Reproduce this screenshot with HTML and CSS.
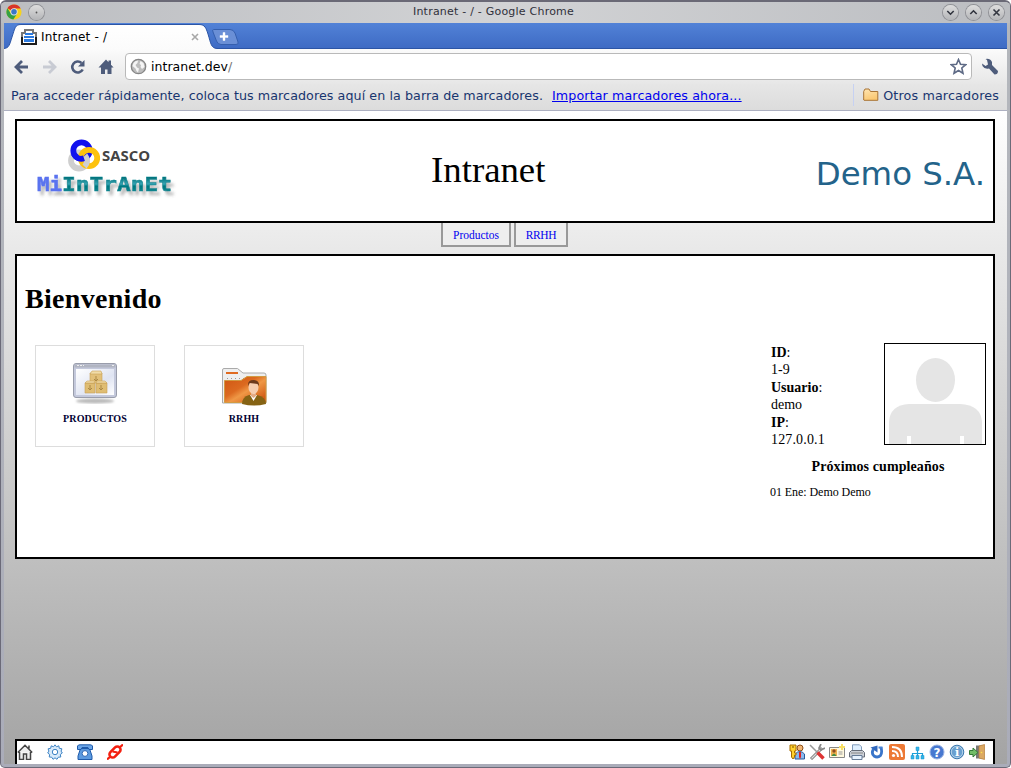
FILE: index.html
```html
<!DOCTYPE html>
<html lang="es">
<head>
<meta charset="utf-8">
<title>Intranet - /</title>
<link rel="stylesheet" href="styles.css">
</head>
<body>
<div class="window">
  <header class="titlebar">
    <svg class="app-icon" width="16" height="16" viewBox="0 0 16 16"><circle cx="8" cy="8" r="7.6" fill="#f5d21e"/><path d="M8 8 1.4 4.2A7.6 7.6 0 0 1 14.7 4.5L8 4.4z" fill="#d8332a"/><path d="M1.4 4.2A7.6 7.6 0 0 0 7.3 15.6L11 10 5 9.8z" fill="#35a044"/><circle cx="8" cy="7.8" r="3.6" fill="#eee"/><circle cx="8" cy="7.8" r="2.8" fill="#3b77c5"/></svg>
    <span class="round-btn pin"><svg width="15" height="15"><circle cx="7.5" cy="7.5" r=".9" fill="#555"/></svg></span>
    <span class="window-title">Intranet - / - Google Chrome</span>
    <span class="controls">
      <span class="round-btn"><svg width="15" height="15"><path d="M4.3 6 7.5 9.2 10.7 6" fill="none" stroke="#333640" stroke-width="1.6"/></svg></span>
      <span class="round-btn"><svg width="15" height="15"><path d="M4.3 9 7.5 5.8 10.7 9" fill="none" stroke="#333640" stroke-width="1.6"/></svg></span>
      <span class="round-btn"><svg width="15" height="15"><path d="M4.5 4.5l6 6M10.5 4.5l-6 6" stroke="#333640" stroke-width="1.6"/></svg></span>
    </span>
  </header>

  <div class="browser">
    <div class="tabstrip">
      <svg class="tab-shape" width="240" height="26" viewBox="0 0 240 26">
        <defs><linearGradient id="tabFill" x2="0" y2="1"><stop offset="0" stop-color="#fff"/><stop offset="1" stop-color="#fbfbfb"/></linearGradient></defs>
        <path d="M0 25.500C5 25 5.500 22 8 14 11 5 11 1.500 17 1.500H195C201 1.500 202 5 204 11 207 21 207 25 213 25.500H240V27H0z" fill="url(#tabFill)" stroke="#2c55a5"/>
        <path d="M209.500 6.500H226Q229.500 6.500 231 10L234 19Q235 21.500 232 21.500H217Q214 21.500 212.500 18L209 9Q208 6.500 209.500 6.500z" fill="#6a8fd6" stroke="#355fae"/>
        <path d="M219 9.500h2v3h3v2h-3v3h-2v-3h-3v-2h3z" fill="#fff" stroke="#fff" stroke-width=".4"/>
      </svg>
      <div class="tab">
        <svg width="16" height="16" viewBox="0 0 16 16"><path d="M3 0h10v3h3v6H0V3h3z" fill="#777"/><path d="M0 8h16v8H0z" fill="#1d1d1d"/><path d="M5 2h6v3h3v9H2V5h3z" fill="#fff"/><path d="M4 4h8v2H4zM3 7h10v2H3zM3 10h10v3H3z" fill="#2d7be0"/></svg>
        <span class="tab-label">Intranet - /</span>
        <svg width="8" height="8"><path d="M1 1l6 6M7 1 1 7" stroke="#a8a8a8" stroke-width="1.6"/></svg>
      </div>
    </div>

    <div class="toolbar">
      <svg width="16" height="16"><path d="M8 2 2 8l6 6M2.500 8h11.500" fill="none" stroke="#4e5c7b" stroke-width="2.800"/></svg>
      <svg width="16" height="16"><path d="M7 2 13 8l-6 6M12.500 8H1" fill="none" stroke="#c8cbd3" stroke-width="2.800"/></svg>
      <svg width="16" height="16"><path d="M12.700 10.500A5.500 5.500 0 1 1 11.500 4" fill="none" stroke="#4e5c7b" stroke-width="2.600"/><path d="M14.500 1v6.500H8z" fill="#4e5c7b"/></svg>
      <svg width="16" height="16"><path d="M.5 8.500 8 .5l2.500 2.800V1.500H13v4.300l2.600 2.700H13.500V15h-4v-4.500h-2.500V15H3V8.500z" fill="#4e5c7b"/></svg>
      <div class="omnibox">
        <svg width="17" height="17" viewBox="0 0 17 17"><circle cx="8.500" cy="8.500" r="7.200" fill="#bdbdbd" stroke="#858585" stroke-width="1.300"/><path d="M3.500 5Q5 2.500 8 2.500L7.500 5 5.500 7 7 9.500l2 1-1 4Q6 13 5.500 10.500L2.500 8zM10.500 3l3 2 1 4-2.500 2-1.500-2 .5-2-1.500-1z" fill="#fff" opacity=".85"/></svg>
        <span class="url">intranet.dev<i>/</i></span>
        <svg width="17" height="17"><path d="M8.500 1.500 10.500 6.300 15.700 6.700 11.800 10 13 15.300 8.500 12.500 4 15.300 5.200 10 1.300 6.700 6.500 6.300z" fill="#fff" stroke="#5f6b86" stroke-width="1.600"/></svg>
      </div>
      <svg class="wrench" width="18" height="18"><path d="M1 5.500 4.500 8 7 6.500 6 2 4.500 1Q9 0 11 4V7L17 13Q17 16.500 13.500 16.500L8 10.500Q3.500 11.500 1.500 8z" fill="#4e5c7b"/></svg>
    </div>

    <div class="bookmarks">
      <span class="hint">Para acceder rápidamente, coloca tus marcadores aquí en la barra de marcadores.</span>
      <a class="import">Importar marcadores ahora...</a>
      <span class="others"><svg width="16" height="14"><defs><linearGradient id="folder" x2=".4" y2="1"><stop stop-color="#ffe5b2"/><stop offset="1" stop-color="#fac873"/></linearGradient></defs><path d="M.7 12V3.500L2 1h4l1.500 2.500h7.300V12.300H1z" fill="url(#folder)" stroke="#a87335"/></svg><b>Otros marcadores</b></span>
    </div>

    <div class="page">
      <div class="box masthead">
        <svg class="logo" width="150" height="72" viewBox="0 0 150 72">
          <defs>
            <linearGradient id="word" x2="0" y2="1"><stop offset=".2" stop-color="#007078"/><stop offset=".5" stop-color="#35a4b4"/><stop offset=".6" stop-color="#007880"/><stop offset="1" stop-color="#168d98"/></linearGradient>
            <filter id="shade" x="-10%" y="-20%" width="125%" height="180%"><feDropShadow dx="3" dy="4" stdDeviation="1.800" flood-color="#555" flood-opacity=".4"/></filter>
          </defs>
          <g fill="none" stroke-width="5.800">
            <circle cx="46" cy="27.500" r="8" stroke="#cfcfcf"/>
            <circle cx="48.500" cy="17.500" r="8.200" stroke="#1111ee"/>
            <circle cx="56" cy="25" r="8.200" stroke="#fdc20d"/>
            <path d="M52 22.500A8 8 0 0 1 51.500 33.500" stroke="#cfcfcf"/>
            <path d="M41 21A8.200 8.200 0 0 0 51 25.300" stroke="#1111ee"/>
          </g>
          <text class="brand" x="69" y="28" textLength="48" lengthAdjust="spacingAndGlyphs">SASCO</text>
          <g filter="url(#shade)"><text class="word my" x="4" y="58" textLength="25" lengthAdjust="spacingAndGlyphs">Mi</text><text class="word" x="29" y="58" textLength="110" lengthAdjust="spacingAndGlyphs">InTrAnEt</text></g>
        </svg>
        <div class="site-title">Intranet</div>
        <div class="company">Demo S.A.</div>
      </div>

      <nav class="nav"><a class="products">Productos</a><a class="hr">RRHH</a></nav>

      <main class="box main">
        <h1>Bienvenido</h1>
        <div class="content">
          <a class="card">
            <svg width="48" height="48" viewBox="0 0 48 48">
              <defs><linearGradient id="screen" x2="1" y2="1"><stop stop-color="#fff"/><stop offset=".6" stop-color="#dfe4f2"/><stop offset="1" stop-color="#fff"/></linearGradient><filter id="soft"><feGaussianBlur stdDeviation="1.200"/></filter></defs>
              <ellipse cx="24" cy="41" rx="19" ry="2.500" fill="#bbb" filter="url(#soft)"/>
              <rect x="2.500" y="3.500" width="43" height="34" rx="2.500" fill="#c4c9dc" stroke="#999dab"/><path d="M3.500 4.500h41v3h-41z" fill="#b1b5c2"/><path d="M6 5.500h2m1 0h2m1 0h1M41 5.500h2" stroke="#eee"/>
              <path d="M5 9h38v26H5z" fill="url(#screen)"/>
              <g stroke="#c9a257" stroke-width=".6"><path d="M14 23h10v10H14zM25 23h11v10H25z" fill="#dfbd73"/><path d="M19 13h12v10H19z" fill="#e2c07a"/><path d="M14 23l2-2h8l-1 2zM25 23l1-2h8l2 2zM19 14l2-3h9l1 3z" fill="#f1dca8"/></g><path d="M25 16v5m-2-2 2 2 2-2M19 25v5m-2-2 2 2 2-2M30 25v5m-2-2 2 2 2-2" stroke="#ab8845" fill="none"/>
            </svg>
            <span>PRODUCTOS</span>
          </a>
          <a class="card">
            <svg width="48" height="48" viewBox="0 0 48 48">
              <defs><linearGradient id="orange" x2="1" y2="1"><stop stop-color="#cf5511"/><stop offset=".4" stop-color="#dc6a20"/><stop offset=".55" stop-color="#ef9846"/><stop offset="1" stop-color="#c94707"/></linearGradient></defs>
              <path d="M2.500 43V10Q2.500 8.500 4 8.500H17.500L23 13H44Q46 13 46 15V43z" fill="#eee" stroke="#aaa"/><path d="M6 12h12v2H6z" fill="#e06a20"/><path d="M7 18.500h18" stroke="#999" stroke-dasharray="1 3"/>
              <path d="M4.500 20.500H21L27 16.500H46V42.500H4.500z" fill="url(#orange)" stroke="#d29b42"/>
              <path d="M22 44Q22 37 29 35H37Q46 37 46 44Q34 47 22 44z" fill="#856314"/><path d="M30 35h7l-3.500 6z" fill="#fff"/><path d="M31 31h5v5l-2.500 2-2.500-2z" fill="#e3ac86"/><ellipse cx="33.500" cy="27.500" rx="5" ry="6.500" fill="#f6ceb1"/><path d="M28 26q-.5-6 5.500-6t5.500 6l-1.500-2-8-1z" fill="#6d3a1c"/>
            </svg>
            <span>RRHH</span>
          </a>
          <aside class="profile">
            <div class="who">
              <div class="facts"><div><b>ID</b>:</div><div>1-9</div><div><b>Usuario</b>:</div><div>demo</div><div><b>IP</b>:</div><div class="ip">127.0.0.1</div></div>
              <svg class="avatar" width="100" height="100"><path d="M4 100V78Q5 61 24 60H75Q96 61 97 78V100z" fill="#e5e5e5"/><ellipse cx="50.500" cy="36" rx="19.500" ry="22" fill="#e5e5e5"/><path d="M22 92h4v8h-4zM75 92h4v8h-4z" fill="#fff"/></svg>
            </div>
            <h2>Próximos cumpleaños</h2>
            <p>01 Ene: Demo Demo</p>
          </aside>
        </div>
      </main>

      <footer class="footer">
        <div class="group left">
          <svg width="16" height="16"><path d="M2.500 8v7.500h4V10h3v5.500h4V8M.8 8.500 8 1.300 15.200 8.500M12 4.500V1.500" fill="#eee" stroke="#444" stroke-width="1.500"/></svg>
          <svg width="16" height="16"><path d="M8 .8l1.500 2 2.300-1 .5 2.500 2.600.5-.8 2.300L15.300 9l-2 1.500.5 2.500-2.500.2L10 15.300l-2-1.500-2 1.500-1.300-2.100-2.500-.2.500-2.500L.7 9l1.200-1.900-.8-2.300 2.600-.5.500-2.500 2.300 1z" fill="#d8eafa" stroke="#3d83c4"/><circle cx="8" cy="8" r="2.700" fill="#fff" stroke="#3d83c4"/></svg>
          <svg width="16" height="16"><path d="M3.500 4.500h9L15 12v3.500H1V12z" fill="#5c9ae0" stroke="#1e5aaa"/><path d="M.5 2Q1 .8 3 .8h10q2 0 2.500 1.200V5.500H12l-1-2H5l-1 2H.5z" fill="#6ba6e8" stroke="#1e5aaa"/><circle cx="8" cy="9.500" r="2.900" fill="#fff" stroke="#2c67b5"/></svg>
          <svg width="16" height="16"><path d="M0 15.500 3.500 12.500M12.500 3.500 16 .5" stroke="#f32010" stroke-width="2.200"/><rect x="1.500" y="4.800" width="13" height="6.400" rx="3.200" transform="rotate(-45 8 8)" fill="none" stroke="#f32010" stroke-width="2.600"/><path d="M5.500 7.500 10.500 8.500" stroke="#f32010" stroke-width="2"/></svg>
        </div>
        <div class="group right">
          <svg width="16" height="16"><circle cx="11" cy="4" r="3" fill="#f1b776" stroke="#8c4e18"/><path d="M6 15V10q5-5 9.500 0v5z" fill="#8ab9ee" stroke="#285a9c"/><path d="M10 8h2v5l-1 2-1-2z" fill="#d22"/><path d="M1 1h6v6H5.500v2H7v2H5.500v2L4 15l-1.500-2V7H1z" fill="#ffd22e" stroke="#a66d00"/><path d="M3 3h2" stroke="#765000"/></svg>
          <svg width="16" height="16"><path d="M2 15 13 4" stroke="#777" stroke-width="3"/><path d="M2.500 14.500 12.500 4.500" stroke="#ddd" stroke-width="1.200"/><path d="M12 0 10 4l2 2 4-2" fill="none" stroke="#888" stroke-width="1.700"/><path d="M1 1l8 8" stroke="#999" stroke-width="1.600"/><path d="M8.500 8.500 14.500 14.500" stroke="#dd3434" stroke-width="3.500"/></svg>
          <svg width="16" height="16"><path d="M.5 3.500h15v10H.5z" fill="#fff9df" stroke="#888"/><path d="M2 5h6v7H2z" fill="#efb050"/><circle cx="5" cy="7" r="1.700" fill="#8c4b20"/><path d="M2.500 12q2.500-5 5 0z" fill="#438c46"/><path d="M9.500 8h4m-4 2h4" stroke="#999"/><path d="M13 0v6m-3-3h6" stroke="#f7df63" stroke-width="2"/></svg>
          <svg width="16" height="16"><path d="M3.500 7V.8h7l2 2V7" fill="#dff0ff" stroke="#809bb9"/><path d="M.5 13V8.500l2-2h11l2 2V13z" fill="#ccd0d7" stroke="#666c78"/><path d="M3 11.500h10v4H3z" fill="#e8f3ff" stroke="#667b96"/><path d="M2 9h12" stroke="#888"/></svg>
          <svg width="16" height="16"><path d="M4.500 5Q2 9.500 5 12Q8.500 14.300 11.500 11.500 13.500 8.500 12 3.500" fill="none" stroke="#3975ca" stroke-width="2.800"/><path d="M1.500 3.500 8.500 1.500V8.500z" fill="#3168bd"/><path d="M9.500 2.500h4v2h-4z" fill="#4b85d5"/></svg>
          <svg width="16" height="16"><rect width="16" height="16" rx="2" fill="#ed7935"/><path d="M3 3Q13 3 13 13M3 7Q9 7 9 13" fill="none" stroke="#fff" stroke-width="2"/><circle cx="4.500" cy="11.500" r="1.600" fill="#fff"/></svg>
          <svg width="16" height="16"><path d="M8.500 6v7M3.500 12V9.500h10V12" fill="none" stroke="#1c9fd8" stroke-width="1.200"/><path d="M7 3h3v3.500H7zM2 11.500h3v3.500H2zM7 11.500h3v3.500H7zM12 11.500h3v3.500h-3z" fill="#35b5e8" stroke="#1495d1" stroke-width=".5"/></svg>
          <svg width="16" height="16"><circle cx="8" cy="8" r="7" fill="#4778d0" stroke="#9ab3e3"/><text x="8" y="12.500" class="glyph q">?</text></svg>
          <svg width="16" height="16"><circle cx="8" cy="8" r="6.800" fill="#69a0cf" stroke="#3978ae"/><circle cx="8" cy="8" r="5.700" fill="none" stroke="#b5d2ea"/><text x="8" y="12" class="glyph i">i</text></svg>
          <svg width="16" height="16"><path d="M7 1.500h7v13H7z" fill="#777"/><path d="M10 2 15.500.5v15L10 14z" fill="#dba862" stroke="#b57c3a" stroke-width=".7"/><circle cx="12.500" cy="8.500" r=".8" fill="#ffe34a"/><path d="M.5 6.500H4V4L9 8.500 4 13V10.500H.5z" fill="#72bd68" stroke="#347b38"/></svg>
        </div>
      </footer>
    </div>
  </div>
</div>
</body>
</html>
```
FILE: styles.css
```css
* { box-sizing: border-box; }
body { margin: 0; width: 1011px; height: 768px; overflow: hidden; background: #fff; font-family: "DejaVu Sans", sans-serif; }
svg { display: block; flex: none; }
.window { width: 1011px; height: 768px; border: 1px solid #6b6a78; border-top: 2px solid #6a6976; border-radius: 6px 6px 5px 5px; background: linear-gradient(#c7c9cc, #b4b7bc 25px, #aaacb9); padding: 0 3px 3px; overflow: hidden; }
.titlebar { height: 21px; display: flex; align-items: center; margin: 0 -3px; padding: 0 6px 1px 5px; background: linear-gradient(90deg, #bbbdc1, #d2d3d5 50%, #bbbdc1); }
.round-btn { width: 15px; height: 15px; border-radius: 50%; background: linear-gradient(#ddd, #b4b5b8); box-shadow: 0 0 0 1px #909196; }
.pin { margin-left: 7px; }
.window-title { flex: 1; text-align: center; font-size: 11px; letter-spacing: .22px; color: #30303a; padding: 0 0 2px; }
.controls { display: flex; gap: 8px; }
.browser { height: 741px; overflow: hidden; display: flex; flex-direction: column; }
.tabstrip { height: 26px; flex: none; background: linear-gradient(#5282d7, #3e6bc4); border-bottom: 1px solid #2c55a5; position: relative; }
.tab-shape { position: absolute; left: 0; top: 0; }
.tab { position: relative; display: flex; align-items: center; padding: 6px 0 0 17px; width: 195px; }
.tab-label { font-size: 12px; margin: 0 auto 1px 4px; letter-spacing: .2px; }
.toolbar { height: 35px; flex: none; background: linear-gradient(#fbfbfb, #e7e7e7); display: flex; align-items: center; gap: 12px; padding: 0 8px 0 10px; }
.omnibox { flex: 1; height: 27px; margin-left: -1px; border: 1px solid #b9b9b9; border-radius: 4px; background: #fff; display: flex; align-items: center; padding: 0 4px; }
.url { flex: 1; font-size: 12.5px; letter-spacing: .03px; margin: 0 0 1px 4px; }
.url i { font-style: normal; color: #777; }
.wrench { margin-left: -3px; }
.bookmarks { height: 27px; flex: none; display: flex; align-items: center; background: linear-gradient(#e6e6e6, #dcdcdc); border-bottom: 1px solid #adb0c1; padding: 0 8px 4px 7px; font-size: 12.7px; color: #18356f; white-space: nowrap; }
.hint { letter-spacing: .065px; }
.import { margin-left: 9px; color: #00e; text-decoration: underline; letter-spacing: .1px; }
.others { margin-left: auto; display: flex; gap: 4px; align-items: center; border-left: 1px solid #c6d1f2; padding-left: 9px; height: 22px; letter-spacing: .16px; }
.others b { font-weight: normal; }
.page { flex: 1; min-height: 0; display: flex; flex-direction: column; padding: 8px 12px 0 11px; background: linear-gradient(#fff 0, #e8e8e8 22%, #999 112%); font-family: "Liberation Serif", serif; }
.box { border: 2px solid #000; background: #fff; }
.masthead { height: 104px; flex: none; display: flex; align-items: center; padding: 0 8px 0 16px; }
.logo { margin-top: -4px; }
.brand { font: bold 15px "Open Sans", sans-serif; fill: #444; }
.word { font: bold 19px "DejaVu Sans Mono", monospace; fill: url(#word); stroke: #168791; stroke-width: .5px; }
.my { fill: #5a73ef; stroke: #5a73ef; }
.site-title { font-size: 36.8px; margin-left: 248px; margin-top: -4px; }
.company { font: 32.4px "DejaVu Sans", sans-serif; color: #23638a; padding-top: 6px; margin-left: auto; }
.nav { height: 31px; flex: none; display: flex; gap: 3px; padding-left: 426px; }
.nav a { height: 24px; border: 2px solid #999; border-top: 0; background: #eee; color: #00e; font-size: 11.5px; line-height: 24px; text-align: center; }
.products { width: 70px; }
.hr { width: 54px; letter-spacing: -.4px; }
.main { height: 305px; flex: none; padding: 0 7px 0 8px; }
h1 { font-size: 28px; line-height: 32px; letter-spacing: .3px; margin: 27px 0 28px; }
.content { display: flex; align-items: flex-start; }
.card { width: 120px; height: 102px; margin: 2px 19px 0 10px; border: 1px solid #ddd; padding-top: 14px; display: flex; flex-direction: column; align-items: center; color: #003; font-weight: bold; font-size: 10px; line-height: 22px; letter-spacing: .15px; }
.profile { margin-left: auto; width: 216px; }
.who { display: flex; justify-content: space-between; height: 102px; }
.facts { font-size: 14px; line-height: 17.4px; padding: 1px 0 0 1px; }
.ip { letter-spacing: .15px; }
.avatar { border: 1px solid #000; width: 102px; height: 102px; }
h2 { font-size: 14px; line-height: 18px; letter-spacing: .1px; text-align: center; margin: 13px 0 0; }
.profile p { font-size: 12px; line-height: 16px; letter-spacing: -.06px; margin: 8px 0 0; }
.footer { margin-top: auto; height: 25px; flex: none; background: #fff; border: 2px solid #000; border-bottom: 0; display: flex; justify-content: space-between; padding: 3px 8px 0 0; }
.group { display: flex; }
.left { gap: 14px; }
.right { gap: 4px; }
.glyph { fill: #fff; text-anchor: middle; font-weight: bold; }
.q { font-family: "DejaVu Sans", sans-serif; font-size: 12px; }
.i { font-family: "DejaVu Serif", serif; font-size: 11px; }
```
